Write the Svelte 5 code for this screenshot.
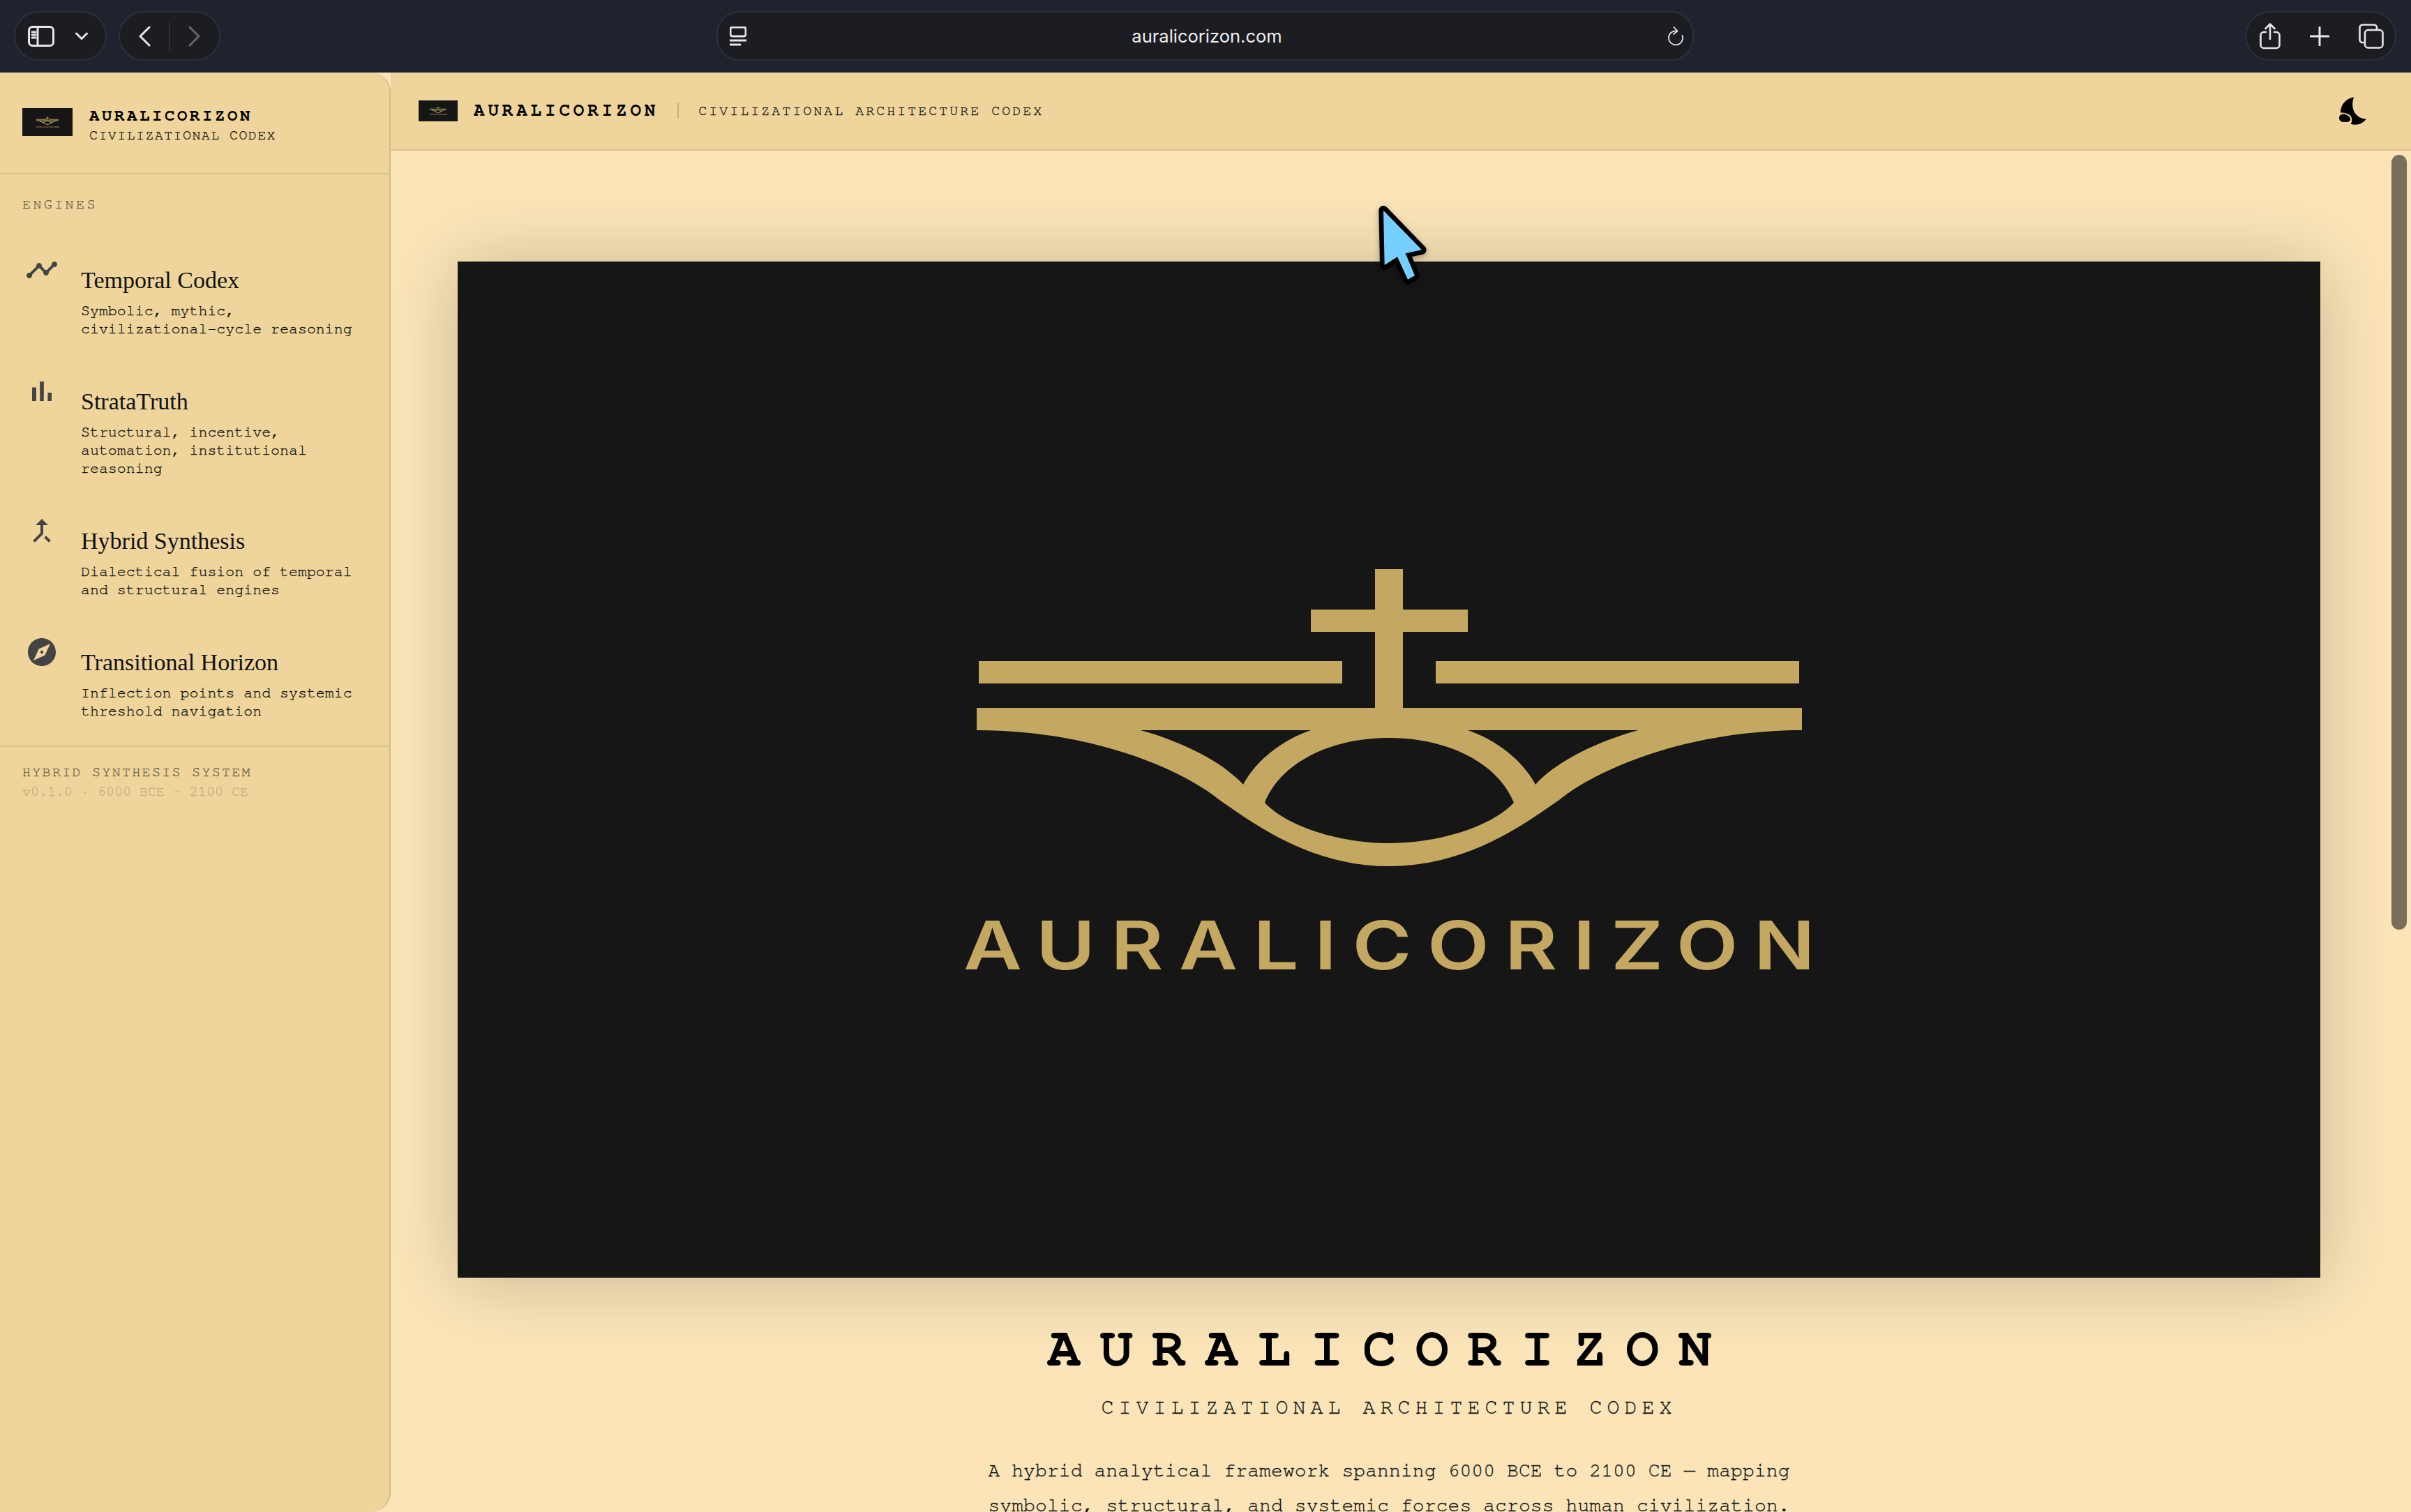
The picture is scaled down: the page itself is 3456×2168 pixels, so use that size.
<script>
  const engines = [
    { title: 'Temporal Codex', desc: 'Symbolic, mythic, civilizational-cycle reasoning', icon: 'M23 8c0 1.1-.9 2-2 2-.18 0-.35-.02-.51-.07l-3.56 3.55c.05.16.07.34.07.52 0 1.1-.9 2-2 2s-2-.9-2-2c0-.18.02-.36.07-.52l-2.55-2.55c-.16.05-.34.07-.52.07s-.36-.02-.52-.07l-4.55 4.56c.05.16.07.33.07.51 0 1.1-.9 2-2 2s-2-.9-2-2 .9-2 2-2c.18 0 .35.02.51.07l4.56-4.55C8.02 9.36 8 9.18 8 9c0-1.1.9-2 2-2s2 .9 2 2c0 .18-.02.36-.07.52l2.55 2.55c.16-.05.34-.07.52-.07s.36.02.52.07l3.55-3.56C19.02 8.35 19 8.18 19 8c0-1.1.9-2 2-2s2 .9 2 2z' },
    { title: 'StrataTruth', desc: 'Structural, incentive, automation, institutional reasoning', icon: 'M5 9.2h3V19H5zM10.6 5h2.8v14h-2.8zm5.6 8H19v6h-2.8z' },
    { title: 'Hybrid Synthesis', desc: 'Dialectical fusion of temporal and structural engines', icon: 'M17 20.41L18.41 19 15 15.59 13.59 17 17 20.41zM7.5 8H11v5.59L5.59 19 7 20.41l6-6V8h3.5L12 3.5 7.5 8z' },
    { title: 'Transitional Horizon', desc: 'Inflection points and systemic threshold navigation', icon: 'M12 10.9c-.61 0-1.1.49-1.1 1.1s.49 1.1 1.1 1.1c.61 0 1.1-.49 1.1-1.1s-.49-1.1-1.1-1.1zM12 2C6.48 2 2 6.48 2 12s4.48 10 10 10 10-4.48 10-10S17.52 2 12 2zm2.19 12.19L6 18l3.81-8.19L18 6l-3.81 8.19z' }
  ];
</script>

{#snippet logo()}
  <svg class="logo" viewBox="656 375 2670 1457" preserveAspectRatio="xMidYMid meet">
    <rect class="logo-bg" x="656" y="375" width="2670" height="1457" />
    <g class="gold">
      <rect x="1971" y="816" width="40" height="210" />
      <rect x="1879" y="874" width="225" height="32" />
      <rect x="1403" y="948" width="521" height="32" />
      <rect x="2058" y="948" width="521" height="32" />
      <path fill-rule="evenodd" d="M1400 1015H2583V1047C2423 1047 2293 1100 2235 1147C2183 1183 2103 1242 1991 1242C1880 1242 1800 1183 1748 1147C1690 1100 1560 1047 1400 1047Z
        M1813 1151C1835 1095 1905 1058 1991 1058C2077 1058 2148 1095 2170 1151C2138 1185 2063 1209 1991 1209C1920 1209 1845 1185 1813 1151Z
        M1635 1047H1879C1840 1060 1800 1090 1782 1125C1755 1095 1700 1065 1635 1047Z
        M2348 1047H2104C2143 1060 2183 1090 2201 1125C2228 1095 2283 1065 2348 1047Z" />
      <text class="logo-text" transform="translate(1381 1390) scale(1.2 1)" x="0" y="0" textLength="1017" lengthAdjust="spacing">AURALICORIZON</text>
    </g>
  </svg>
{/snippet}

<div class="window">
  <header class="toolbar">
    <div class="tool-left">
      <div class="pill side-pill">
        <svg class="tb" width="38" height="30" viewBox="0 0 38 30">
          <rect x="1.5" y="1.5" width="35" height="27" rx="5" />
          <path d="M14 2v26" />
          <path d="M6 9h5M6 13h5M6 17h5" />
        </svg>
        <svg class="tb" width="18" height="12" viewBox="0 0 18 12"><path d="M1.5 2L9 9.5 16.5 2" /></svg>
      </div>
      <div class="pill nav-pill">
        <svg class="tb" width="18" height="30" viewBox="0 0 18 30"><path d="M16 2L3 15l13 13" /></svg>
        <span class="pill-div"></span>
        <svg class="tb dim" width="18" height="30" viewBox="0 0 18 30"><path d="M2 2l13 13L2 28" /></svg>
      </div>
    </div>
    <div class="address">
      <svg class="tb addr-menu" width="24" height="28" viewBox="0 0 24 28">
        <rect x="1" y="1" width="22" height="13" rx="3" />
        <path d="M0 20h24M0 26h15" />
      </svg>
      <span class="url">auralicorizon.com</span>
      <svg class="tb addr-reload" width="24" height="28" viewBox="0 0 24 28">
        <path class="thin" d="M14 6.5A10 10 0 1 0 21.5 13" />
        <path class="thin" d="M9.5 1l5 5.500-5.500 4.500" />
      </svg>
    </div>
    <div class="tool-right">
      <div class="pill right-pill">
        <svg class="tb" width="30" height="38" viewBox="0 0 30 38">
          <path class="thin2" d="M9 13H6a4.500 4.500 0 0 0-4.500 4.500v14A4.500 4.500 0 0 0 6 36h18a4.500 4.500 0 0 0 4.500-4.500v-14A4.500 4.500 0 0 0 24 13h-3" />
          <path class="thin2" d="M15 23V2M8.500 8L15 1.500 21.500 8" />
        </svg>
        <svg class="tb" width="28" height="28" viewBox="0 0 28 28"><path d="M14 1v26M1 14h26" /></svg>
        <svg class="tb" width="36" height="36" viewBox="0 0 36 36">
          <path class="thin2" d="M7 27H5.500A4 4 0 0 1 1.500 23V5.500A4 4 0 0 1 5.500 1.500H22A4 4 0 0 1 26 5.500V8" />
          <rect class="thin2" x="9" y="9" width="25.500" height="25.500" rx="4.500" />
        </svg>
      </div>
    </div>
  </header>

  <div class="body">
    <aside class="sidebar">
      <div class="side-head">
        <div class="thumb side-thumb">{@render logo()}</div>
        <div class="side-brand">
          <div class="side-title">AURALICORIZON</div>
          <div class="side-sub">CIVILIZATIONAL CODEX</div>
        </div>
      </div>
      <div class="side-label">ENGINES</div>
      <nav class="engines">
        {#each engines as e}
          <div class="engine">
            <svg class="engine-icon" width="48" height="48" viewBox="0 0 24 24"><path d={e.icon} /></svg>
            <div class="engine-text">
              <div class="engine-title">{e.title}</div>
              <div class="engine-desc">{e.desc}</div>
            </div>
          </div>
        {/each}
      </nav>
      <div class="side-foot">
        <div class="foot-a">HYBRID SYNTHESIS SYSTEM</div>
        <div class="foot-b">v0.1.0 · 6000 BCE – 2100 CE</div>
      </div>
    </aside>

    <div class="main">
      <div class="topbar">
        <div class="thumb top-thumb">{@render logo()}</div>
        <span class="top-title">AURALICORIZON</span>
        <span class="top-div"></span>
        <span class="top-sub">CIVILIZATIONAL ARCHITECTURE CODEX</span>
        <svg class="moon" width="42" height="42" viewBox="756 414 126 126">
          <path d="M825 418C790 425 768 450 768 485C780 483 795 487 808 495C818 505 820 520 812 533C840 542 865 530 878 512C845 512 805 480 825 418Z" />
          <path d="M762 507C762 495 775 488 788 492C800 495 812 505 810 515C808 525 795 526 785 524C772 526 762 520 762 507Z" />
        </svg>
      </div>
      <div class="scroll">
        <div class="content">
          <div class="hero">{@render logo()}</div>
          <h1 class="title">AURALICORIZON</h1>
          <div class="subtitle">CIVILIZATIONAL ARCHITECTURE CODEX</div>
          <p class="lead">A hybrid analytical framework spanning 6000 BCE to 2100 CE — mapping symbolic, structural, and systemic forces across human civilization.</p>
        </div>
        <div class="gutter"><div class="thumbbar"></div></div>
      </div>
    </div>
  </div>

  <svg class="cursor" width="78" height="120" viewBox="220 90 234 360">
    <path d="M250 125L415 295L345 310L385 405L355 422L310 325L255 360Z" />
  </svg>
</div>

<style>
  :global(body) { margin: 0; background: #20232d; }
  .window { position: relative; width: 3456px; height: 2168px; overflow: hidden; display: flex; flex-direction: column; --mono: "Courier 10 Pitch", "Nimbus Mono PS", "FreeMono", "Liberation Mono", monospace; }

  .toolbar { height: 104px; flex: none; background: #20232d; display: grid; grid-template-columns: 1fr 1401px 1fr; align-items: start; padding: 16px 21px 0 20px; box-sizing: border-box; }
  .tool-left { display: flex; gap: 17px; }
  .tool-right { display: flex; justify-content: flex-end; }
  .pill { height: 71px; box-sizing: border-box; border: 2px solid #2d2f3b; border-radius: 36px; background: #1c1d22; display: flex; align-items: center; }
  .side-pill { width: 133px; padding-left: 18px; gap: 30px; }
  .nav-pill { width: 146px; padding-left: 26px; position: relative; }
  .pill-div { width: 2px; height: 40px; background: #2f3038; margin: 0 26px 0 26px; }
  .right-pill { width: 217px; padding-left: 19px; gap: 42px; }
  .tb { flex: none; fill: none; stroke: #e6e6e8; stroke-width: 3; stroke-linecap: round; stroke-linejoin: round; }
  .tb.dim { stroke: #666669; }
  .thin { stroke-width: 1.800; }
  .thin2 { stroke-width: 2.600; }
  .address { height: 71px; box-sizing: border-box; border: 2px solid #2d2f3b; border-radius: 32px; background: #1c1d22; display: flex; align-items: center; justify-content: space-between; padding: 0 12px 0 17px; position: relative; }
  .url { font-family: "Inter", "Liberation Sans", sans-serif; font-size: 25.500px; color: #eeeeef; flex: 1; text-align: center; line-height: 32px; padding-top: 1px; }

  .body { flex: 1; display: flex; min-height: 0; background: #fae4b8; }

  .sidebar { width: 560px; flex: none; box-sizing: border-box; background: #efd59b; border-right: 2px solid #d4bc87; border-radius: 0 28px 28px 0; display: flex; flex-direction: column; }
  .side-head { height: 146px; box-sizing: border-box; border-bottom: 2px solid #d9c088; display: flex; align-items: center; gap: 24px; padding: 0 32px 2px; flex: none; }
  .thumb { background: #171717; flex: none; line-height: 0; }
  .side-thumb { width: 72px; height: 40px; }
  .side-brand { font-family: var(--mono); color: #000; padding-top: 10px; }
  .side-title { font-size: 24px; font-weight: 700; letter-spacing: 3.600px; line-height: 28px; }
  .side-sub { font-size: 20px; letter-spacing: 1.400px; line-height: 28px; color: #111; -webkit-text-stroke: 0.3px #111; }
  .side-label { font-family: var(--mono); font-size: 20px; letter-spacing: 3.400px; color: #6d6148; -webkit-text-stroke: 0.3px #6d6148; line-height: 24px; padding: 31px 32px 0; }
  .engines { display: flex; flex-direction: column; padding-top: 42px; }
  .engine { display: flex; gap: 32px; padding: 16px 32px 0 36px; box-sizing: border-box; }
  .engine-icon { fill: #444; flex: none; }
  .engine-text { padding-top: 21px; padding-bottom: 36px; }
  .engine-title { font-family: "Liberation Serif", serif; font-size: 34px; line-height: 36px; color: #111; }
  .engine-desc { font-family: var(--mono); font-size: 21.600px; line-height: 26px; color: #111; -webkit-text-stroke: 0.3px #111; margin-top: 13px; width: 412px; }
  .side-foot { border-top: 2px solid #dcc48e; padding: 22px 32px 0; font-family: var(--mono); font-size: 20px; line-height: 28px; }
  .foot-a { letter-spacing: 2.300px; color: #6d6148; -webkit-text-stroke: 0.3px #6d6148; }
  .foot-b { color: #c4ae82; -webkit-text-stroke: 0.3px #c4ae82; }

  .main { flex: 1; min-width: 0; display: flex; flex-direction: column; }
  .topbar { height: 112px; flex: none; box-sizing: border-box; background: #efd59b; border-bottom: 2px solid #d9c088; display: flex; align-items: center; padding: 0 63px 0 40px; font-family: var(--mono); }
  .top-thumb { width: 56px; height: 30px; }
  .top-title { font-size: 26px; font-weight: 700; letter-spacing: 4.800px; color: #000; margin-left: 23px; margin-top: -2px; }
  .top-div { width: 2px; height: 22px; background: #c9b07a; margin: 0 28px 0 27px; }
  .top-sub { font-size: 20px; letter-spacing: 3px; color: #111; -webkit-text-stroke: 0.3px #111; }
  .moon { margin-left: auto; fill: #000; }

  .scroll { flex: 1; display: flex; min-height: 0; }
  .content { flex: 1; min-width: 0; box-sizing: border-box; padding: 159px 94px 0 96px; display: flex; flex-direction: column; align-items: center; }
  .hero { width: 100%; height: 1457px; flex: none; box-shadow: 0 4px 100px rgba(0,0,0,.2); line-height: 0; }
  .logo { width: 100%; height: 100%; display: block; }
  .logo-bg { fill: #161616; }
  .gold { fill: #c4a862; }
  .logo-text { font-family: "Inter", "Open Sans", sans-serif; font-size: 96px; font-weight: 600; }
  .title { margin: 62px 0 0; font-family: var(--mono); font-size: 80px; font-weight: 700; letter-spacing: 27.400px; line-height: 80px; color: #000; text-align: center; }
  .subtitle { margin-top: 26px; font-family: var(--mono); font-size: 30px; letter-spacing: 7px; line-height: 36px; color: #111; -webkit-text-stroke: 0.3px #111; text-align: center; }
  .lead { margin: 48px 0 0; max-width: 1200px; font-family: var(--mono); font-size: 28px; letter-spacing: 0.100px; line-height: 50px; color: #111; -webkit-text-stroke: 0.3px #111; text-align: center; }
  .gutter { width: 36px; flex: none; padding: 6px 6px 0 8px; box-sizing: border-box; }
  .thumbbar { height: 1111px; border-radius: 11px; background: #7a6f5b; }

  .cursor { position: absolute; left: 1973px; top: 290px; fill: #75d0ff; stroke: #000; stroke-width: 40; stroke-linejoin: round; paint-order: stroke; filter: drop-shadow(0 3px 4px rgba(0,0,0,.3)); }
</style>
